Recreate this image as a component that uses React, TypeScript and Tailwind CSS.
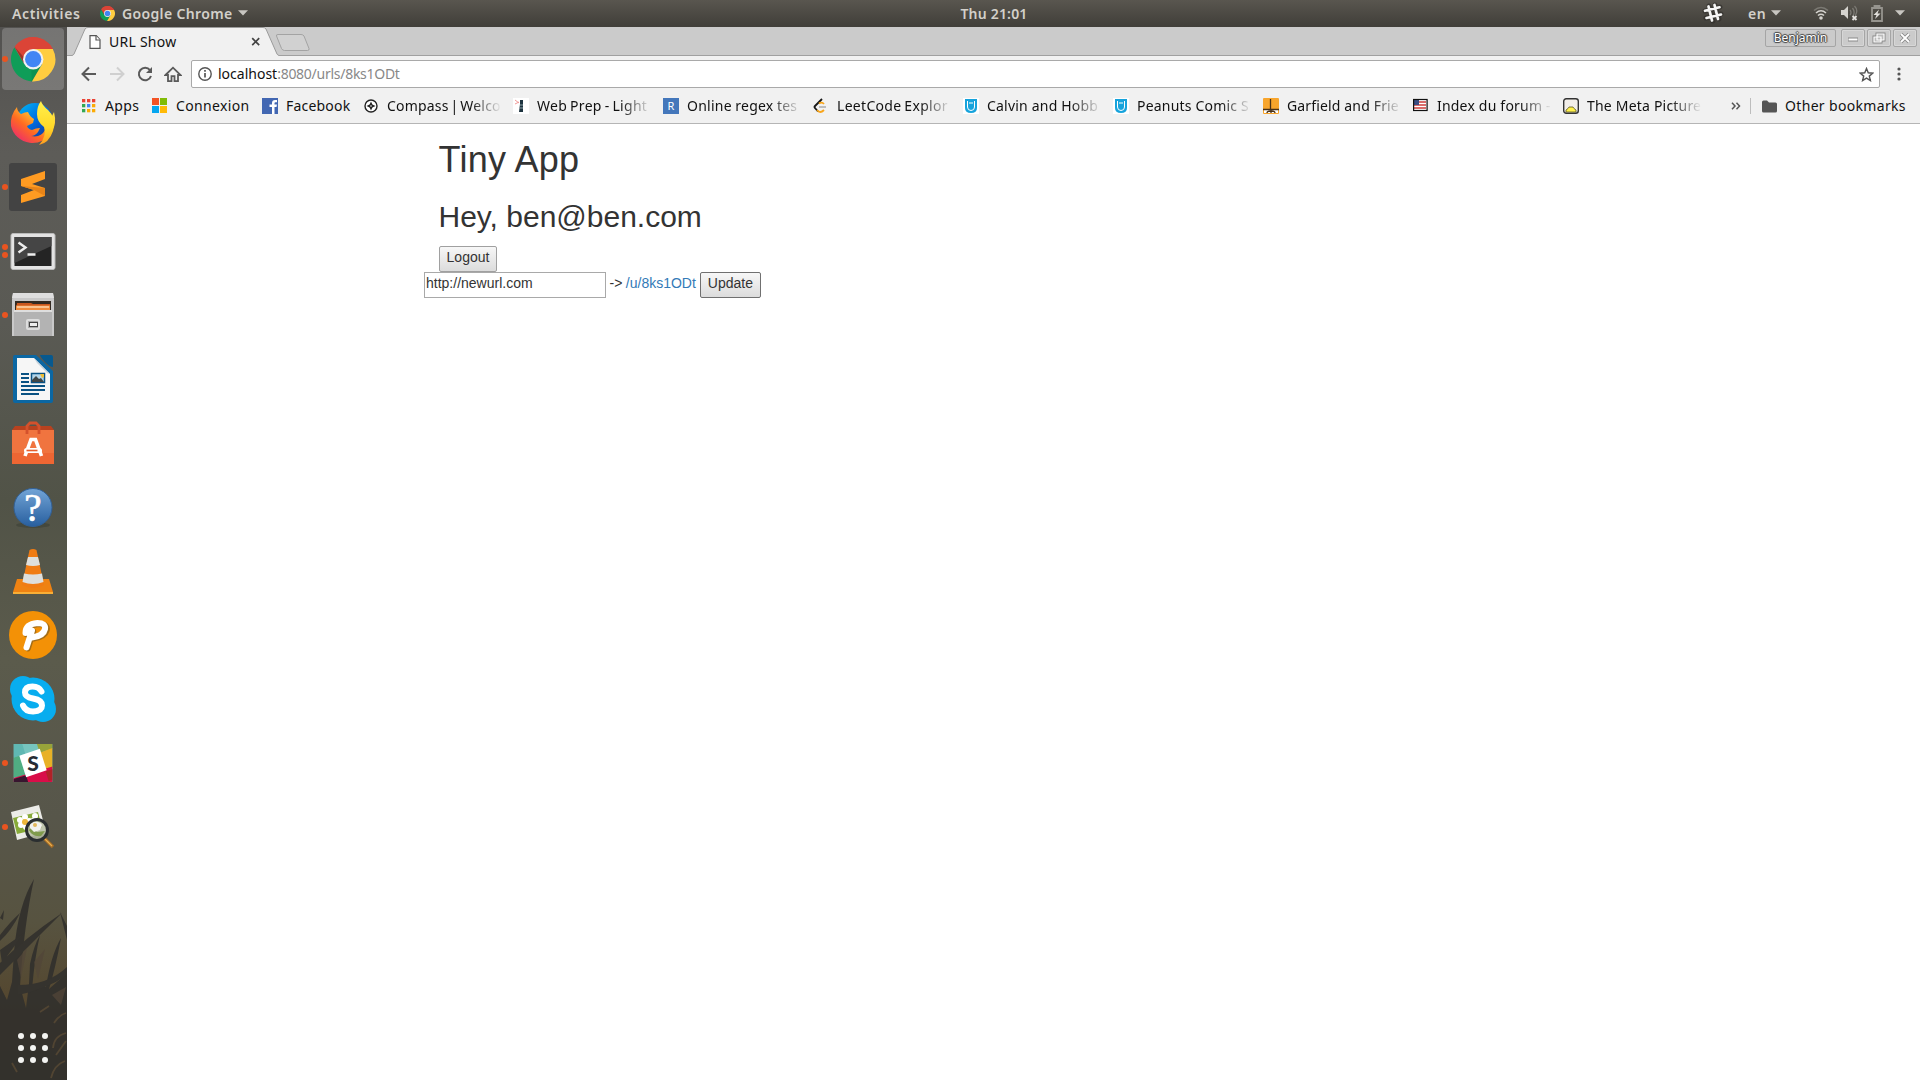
import type { ReactNode } from "react";

const ui = "font-['Noto_Sans','Open_Sans',sans-serif]";

function ChromeLogo({ size }: { size: number }) {
  return (
    <svg width={size} height={size} viewBox="0 0 48 48" className="shrink-0">
      <path d="M24 24 4.1 10.6A24 24 0 0 1 45.2 13H24z" fill="#db4437" />
      <path d="M3.6 11.4A24 24 0 0 0 22.6 48L33.5 29.5 14.5 29.5z" fill="#0f9d58" />
      <path d="M45.2 13A24 24 0 0 1 22.6 48L33.5 29.5 24 13z" fill="#ffcd40" />
      <path d="M24 13h21.2A24 24 0 0 0 4 10.8L14.5 29 18 16z" fill="#db4437" />
      <circle cx="24" cy="24" r="11" fill="#f1f1f1" />
      <circle cx="24" cy="24" r="8.8" fill="#4285f4" />
    </svg>
  );
}

function Caret() {
  return (
    <svg width="10" height="6" viewBox="0 0 10 6" className="shrink-0">
      <path d="M0 .3h10L5 5.6z" fill="#c8c6c1" />
    </svg>
  );
}

function TopBar() {
  return (
    <header className={`${ui} grid h-[27px] shrink-0 grid-cols-[1fr_auto_1fr] items-center bg-linear-to-b from-[#59564f] to-[#403e39] pb-px text-[14px] font-semibold text-[#d3d0ca]`}>
      <div className="flex items-center pl-3">
        <span className="w-[88px] whitespace-nowrap tracking-[0.6px]">Activities</span>
        <ChromeLogo size={15} />
        <span className="ml-[7px] w-[116px] whitespace-nowrap tracking-[0.35px]">Google Chrome</span>
        <Caret />
      </div>
      <span className="pl-[68px] tracking-[0.2px]">Thu 21:01</span>
      <div className="flex items-center justify-end pr-[15px]">
        <svg width="22" height="22" viewBox="0 0 22 22" className="mr-[24px]">
          <g stroke="#2d2c28" strokeWidth="5" strokeLinecap="round" fill="none" opacity=".6">
            <path d="M7 4l4 15M13 3l4 14M3 9l15-4M4 16l15-4" />
          </g>
          <g stroke="#f6f6f5" strokeWidth="2.700" strokeLinecap="round" fill="none">
            <path d="M6.500 4.500l3.500 14M12.500 3l3.500 14M3 8.800l14.500-3.500M4.500 16l14.500-3.500" />
          </g>
        </svg>
        <span className="mr-[5px] tracking-[0.4px]">en</span>
        <Caret />
        <svg width="16" height="14" viewBox="0 0 16 14" className="ml-[32px]" fill="none" strokeWidth="1.6">
          <path d="M1 4.500Q8-1.500 15 4.500" stroke="#7b7973" />
          <path d="M3 7Q8 2.500 13 7M5 9.500Q8 7 11 9.500" stroke="#d5d3ce" />
          <circle cx="8" cy="12" r="1.800" fill="#d5d3ce" />
        </svg>
        <svg width="18" height="16" viewBox="0 0 18 16" className="ml-[12px]">
          <path d="M0 5h3l4-4v13l-4-4H0z" fill="#d5d3ce" />
          <path d="M9 5q2 2.500 0 5M11.500 3q3 4 .5 8M13.500 1q4 4 1 9" stroke="#7b7973" strokeWidth="1.300" fill="none" />
          <path d="M11.500 11l4 4m0-4l-4 4" stroke="#e2e0dc" strokeWidth="1.800" />
        </svg>
        <svg width="12" height="17" viewBox="0 0 12 17" className="ml-[12px]">
          <path d="M3.500 2.500V1h5v1.500M1 3h10v13H1z" stroke="#96948e" strokeWidth="1.800" fill="none" />
          <path d="M8 4.500 2.500 10h3L4 14l5.500-5.500h-3z" fill="#e2e0dc" />
        </svg>
        <span className="ml-[12px] flex"><Caret /></span>
      </div>
    </header>
  );
}

function DockItem({ dots = 0, active = false, children }: { dots?: number; active?: boolean; children: ReactNode }) {
  return (
    <div className="relative flex h-16 items-center justify-center">
      {active && <div className="absolute left-[2px] top-px h-[62px] w-[62px] rounded-[4px] bg-white/20" />}
      <div className="absolute left-[2px] flex h-full flex-col items-center justify-center gap-[2px]">
        {Array.from({ length: dots }, (_, i) => (
          <span key={i} className="size-[6px] rounded-full bg-[#e95420]" />
        ))}
      </div>
      <svg width="48" height="48" viewBox="0 0 48 48" className="relative -left-px">
        {children}
      </svg>
    </div>
  );
}

function Grass() {
  return (
    <svg className="absolute bottom-0 left-0" width="67" height="210" viewBox="0 870 67 210">
      <path d="M0 1080V986l7 14 5-18 2-30Q18 905 34 879 24 925 20 986l6 22 3-24 1-20Q34 945 40 935 35 955 32 989l10-2 4 0Q51 955 61 938 55 970 49 989l18-16v107z" fill="#33312d" opacity=".96" />
      <g fill="#35332e">
        <path d="M0 963Q25 938 62 913 35 940 0 975zM0 935q10-13 20-22-8 17-20 28zM0 918l4-8-1 10zM0 950l24-17-22 30zM60 912l7 14v14zM18 985q30 0 49-18v8q-20 14-49 20z" />
      </g>
      <path d="M17 960l10-12-6 30zM34 962l11-13-7 30zM52 995l14-8-5 18z" fill="#514638" opacity=".75" />
      <g stroke="#594a35" strokeWidth="1.800" fill="none" opacity=".8">
        <path d="M54 1023q5-8 12-10M53 1048q1-12 13-15M56 1055l10-14M51 1078q3-13 14-17M12 1063l5 9M40 1012l9-6" />
      </g>
    </svg>
  );
}

function Dock() {
  return (
    <nav className="relative w-[67px] shrink-0 overflow-hidden bg-[linear-gradient(to_bottom,#535250_0%,#5d5c58_12%,#5a5a54_28%,#515347_45%,#5b5b4c_60%,#57564a_75%,#575340_85%,#54462e_93%,#3c3327_100%)]">
      <Grass />
      <div className="relative flex h-full flex-col">
        <DockItem dots={1} active>
          <g transform="translate(2 2) scale(.925)">
            <path d="M24 24 4.100 10.600A24 24 0 0 1 45.200 13z" fill="#db4437" />
            <path d="M3.600 11.400A24 24 0 0 0 22.600 48L33.500 29.500h-19z" fill="#0f9d58" />
            <path d="M45.200 13A24 24 0 0 1 22.600 48L33.500 29.500 24 13z" fill="#ffcd40" />
            <path d="M24 13h21.200A24 24 0 0 0 4 10.800L14.500 29 18 16z" fill="#db4437" />
            <path d="M4 10.800 14.500 29 14 22z" fill="#9c3428" />
            <path d="M22.600 48L33.500 29.500 22 34z" fill="#0b7d45" opacity=".35" />
            <circle cx="24" cy="24" r="11" fill="#f1f1f1" />
            <circle cx="24" cy="24" r="8.800" fill="#4285f4" />
          </g>
        </DockItem>
        <DockItem>
          <defs>
            <linearGradient id="fox" x1="1" y1="0" x2="0" y2="1">
              <stop offset="0" stopColor="#fff44f" /><stop offset=".35" stopColor="#ffbd2b" /><stop offset=".6" stopColor="#ff6a22" /><stop offset="1" stopColor="#e61587" />
            </linearGradient>
            <linearGradient id="globe" x1="0" y1="0" x2="1" y2="1">
              <stop offset="0" stopColor="#00bdf5" /><stop offset=".5" stopColor="#006be0" /><stop offset="1" stopColor="#1b2a86" />
            </linearGradient>
            <linearGradient id="tail" x1="0" y1="0" x2="0" y2="1">
              <stop offset="0" stopColor="#fff04d" /><stop offset=".6" stopColor="#ffd928" /><stop offset="1" stopColor="#ff9a20" />
            </linearGradient>
          </defs>
          <circle cx="26" cy="22" r="18" fill="url(#globe)" />
          <path d="M8 8q0 4 4 7 4-2 7-2 2 5 6 7l-1 4-6 3q1 3 5 4 4-2 8-2l-2 4q-3 4-7 4 10 2 14-6l9-18q3 12-2 19a22 22 0 0 1-41-5Q1 16 8 8z" fill="url(#fox)" />
          <path d="M32 2q1 4 7 9 9 8 5 21-4 12-14 14 8-9 5-18-7-5-7-13 0-8 4-13z" fill="url(#tail)" />
        </DockItem>
        <DockItem dots={1}>
          <rect width="48" height="48" rx="3" fill="#434343" />
          <path d="M12 16l24-8v8l-13 5 13 4v8l-24 7v-8l13-5-13-4z" fill="#ff9b22" />
          <path d="M12 23l24 2v8l-11-6z" fill="#e88418" />
        </DockItem>
        <DockItem dots={2}>
          <g transform="translate(.5 1)">
            <rect x="1.500" y="5.500" width="44" height="36" rx="2" fill="#e3e3e3" stroke="#bababa" />
            <rect x="5" y="9" width="37" height="29" fill="#242424" />
            <path d="M5 9h37v9L5 35z" fill="#454545" />
            <path d="M9 14.500l7 5-7 5M18 26.500h8" stroke="#eee" strokeWidth="2.400" fill="none" />
          </g>
        </DockItem>
        <DockItem dots={1}>
          <path d="M4 2h40l1 6v37H3V8z" fill="#c9c9c9" />
          <path d="M4 2h40l1 5H3z" fill="#dedede" />
          <path d="M6 10h36v13H6z" fill="#332a22" />
          <path d="M8 12h14l2 1h17v7H7z" fill="#c9571f" />
          <path d="M7 14.500h34v6H7z" fill="#f08a3c" />
          <path d="M8 16h32" stroke="#ffe1bd" strokeWidth="1.300" />
          <path d="M5 19h38v26H5z" fill="#b3b3b3" />
          <path d="M5 19h38v2H5z" fill="#dedede" />
          <rect x="18" y="29" width="12" height="9" rx="1" fill="#aaa" stroke="#ddd" strokeWidth="2" />
          <rect x="20.500" y="31.500" width="8" height="4" fill="#eee" stroke="#444" />
        </DockItem>
        <DockItem>
          <path d="M6 0h21l17 16v30q0 2-2 2H6q-2 0-2-2V2q0-2 2-2z" fill="#0b67a3" />
          <path d="M31 0h11q2 0 2 2v10q-3 0-7-4-5-5-6-8z" fill="#07598f" />
          <path d="M8 3h17l16 16v26H8z" fill="#f6f6f6" />
          <path d="M25 3l4 4 12 12-3-1-10-10z" fill="#c9d4dc" />
          <path d="M12 19h8M12 23h8M12 27h8M12 31h24M12 35h24M12 39h18" stroke="#0a5283" strokeWidth="2" />
          <path d="M22.500 18.500h13v9h-13z" fill="#b2d5ea" stroke="#0a5283" strokeWidth="1.500" />
          <path d="M23 27v-2l4-4 3 3 2-1 3 4z" fill="#404647" />
          <path d="M31 19h4v3l-2 1z" fill="#f0bd35" />
        </DockItem>
        <DockItem>
          <g transform="translate(0 2)">
            <path d="M3 9h42v34H3z" fill="#ee6633" />
            <path d="M3 9h42v23H3z" fill="#f0743f" />
            <path d="M3 9l3-4h36l3 4z" fill="#b8421f" />
            <path d="M18 13V5l3-3h6l3 3v8" stroke="#d4512c" strokeWidth="2.800" fill="none" />
            <path d="M16 35l6-16.500h4.500l6 16.500" stroke="#fff" strokeWidth="3.600" fill="none" />
            <rect x="15" y="27" width="18" height="5" rx="2.500" fill="#fff" />
            <path d="M17.500 29.500h11" stroke="#e65f2d" strokeWidth="1.600" />
          </g>
        </DockItem>
        <DockItem>
          <defs>
            <linearGradient id="help" x1="0" y1="0" x2="0" y2="1"><stop stopColor="#72a4d6" /><stop offset="1" stopColor="#285f9f" /></linearGradient>
          </defs>
          <ellipse cx="24" cy="42" rx="17" ry="3" fill="#33362e" opacity=".4" />
          <circle cx="24" cy="24.500" r="19" fill="url(#help)" stroke="#315f95" />
          <text x="24" y="37.500" textAnchor="middle" className="font-['Liberation_Serif',serif] text-[39px]" fill="#fff" stroke="#fff" strokeWidth=".7">?</text>
        </DockItem>
        <DockItem>
          <path d="M8 32h32l4 13H4z" fill="#ef8212" />
          <path d="M4 45h40v2H4z" fill="#f8ae36" />
          <path d="M20.500 3q3.500-2 7 0l7.500 35q-11 6-22 0z" fill="#f07c14" />
          <path d="M19 10h10l2 8q-7 2-14 0zM15 26.500q9 2 18 0l1.500 8.500q-10.500 4-21 0z" fill="#dedfdd" />
        </DockItem>
        <DockItem>
          <circle cx="24" cy="24" r="24" fill="#f39106" />
          <g fill="none" strokeLinecap="round" strokeLinejoin="round">
            <path d="M18 36.500l5.500-17M17 22.500q0-9.500 12-10.500 9 0 8 6-2 7-13 8.500" stroke="#85601e" strokeWidth="6" opacity=".7" transform="translate(.8 1)" />
            <path d="M17.500 36.500l5.500-17M16.500 22q0-9 12-10 8.500 0 7.500 6-1.500 7-13 8.500" stroke="#fff" strokeWidth="6" />
          </g>
        </DockItem>
        <DockItem>
          <circle cx="24" cy="24" r="21.500" fill="#08adef" /><circle cx="14" cy="14" r="13" fill="#08adef" /><circle cx="34" cy="34" r="13" fill="#08adef" />
          <path d="M32.500 16.500q-2.500-5-9-5-7.500 0-7.500 6 0 4.500 8 6 9 1.500 9 7t-9 6q-7.500 0-10-6" stroke="#fff" strokeWidth="6" strokeLinecap="round" fill="none" />
        </DockItem>
        <DockItem dots={1}>
          <svg x="4.500" y="4.500" width="39" height="39" viewBox="0 0 40 39">
            <rect width="40" height="39" fill="#76c5bf" />
            <path d="M0 0h9l3 10L0 14z" fill="#60b8b3" /><path d="M0 14l6-2 7 22H0z" fill="#50ad82" />
            <path d="M24 0h16v5L27 9z" fill="#97a33a" /><path d="M27 9l13-5v22l-7 2z" fill="#e8b126" />
            <path d="M0 35l40-12v16H0z" fill="#d90d49" /><path d="M0 36l13-4 2 7H0z" fill="#38152f" />
            <path d="M33 28l7-2v11l-4 1z" fill="#b12227" />
            <path d="M6 12l21-7 7 22-21 7z" fill="#fff" />
          </svg>
          <text x="24" y="31.500" textAnchor="middle" className="font-['Lato',sans-serif] text-[21px] font-black" fill="#262c35">S</text>
        </DockItem>
        <DockItem dots={1}>
          <path d="M2 9l28-7 7 27L8 37z" fill="#ecece8" />
          <path d="M4 15l25-6 4 16-25 6z" fill="#87aa39" />
          <g fill="#fff"><circle cx="11" cy="17" r="3" /><circle cx="16" cy="14" r="3" /><circle cx="20" cy="18" r="3" /><circle cx="12" cy="22" r="3" /><circle cx="17" cy="24" r="3" /><circle cx="26" cy="13" r="3" /><circle cx="24" cy="18" r="3" /></g>
          <circle cx="16" cy="19" r="3" fill="#edb73b" />
          <path d="M35 35l9 9" stroke="#a46c27" strokeWidth="3.500" /><path d="M34 34l9 9" stroke="#e8ae4e" strokeWidth="1.300" />
          <circle cx="28" cy="27" r="10.500" fill="#b9bfa6" fillOpacity=".85" />
          <path d="M20 27q3 7 12 6l4-5-8 1-5-5z" fill="#7f9b4c" />
          <path d="M21 21q8-5 12 1l-2 5-6 2-4-4z" fill="#f2f2ee" />
          <circle cx="26" cy="22" r="2" fill="#e2b85a" />
          <circle cx="28" cy="27" r="10.500" fill="none" stroke="#2a2e30" strokeWidth="3" />
        </DockItem>
        <div className="mt-auto mb-[17px] grid grid-cols-3 gap-[6px] self-center pr-px">
          {Array.from({ length: 9 }, (_, i) => (
            <span key={i} className="size-[6px] rounded-full bg-[#f4f4f2]" />
          ))}
        </div>
      </div>
    </nav>
  );
}

function WinButton({ children }: { children: ReactNode }) {
  return (
    <div className="flex h-[18px] w-6 items-center justify-center rounded-[2px] border border-[#a5a5a5] bg-[#cbcbcb] shadow-[inset_0_0_0_1px_#d7d7d7]">
      <svg width="14" height="14" viewBox="0 0 14 14" fill="none">{children}</svg>
    </div>
  );
}

function TabStrip() {
  return (
    <div className={`${ui} relative flex h-[29px] shrink-0 items-start border-b border-[#a0a0a0] bg-[#cbcbcb]`}>
      <div className="relative ml-[5px] flex h-[29px] w-[208px] items-center pl-[17px]">
        <svg className="absolute left-0 top-0" width="208" height="29" viewBox="0 0 208 29">
          <path d="M0 28.500 2 27 13 2Q14 .5 16 .5H191Q193 .5 194 2L205 27l2 1.500V29H0z" fill="#f1f1f1" />
          <path d="M0 28.500Q1.500 28 2 27L13 2Q14 .5 16 .5H191Q193 .5 194 2L205 27q.5 1 2 1.500" stroke="#9b9b9b" fill="none" />
        </svg>
        <svg width="12" height="14" viewBox="0 0 12 14" className="relative" fill="#fff" stroke="#555" strokeWidth="1.200">
          <path d="M1 .7h6.300l3.700 4v8.600H1z" /><path d="M7 1v4h4" />
        </svg>
        <span className="relative ml-[8px] w-[141px] whitespace-nowrap text-[14px] tracking-[0.25px] text-[#111]">URL Show</span>
        <svg width="10" height="10" viewBox="0 0 10 10" className="relative ml-[1px]"><path d="M1.200 1.200l7 7m0-7l-7 7" stroke="#444" strokeWidth="1.700" /></svg>
      </div>
      <svg width="36" height="20" viewBox="0 0 36 20" className="-ml-[5px] mt-[6px]">
        <path d="M3 1.500H26Q28 1.500 29 3L34 15.500Q34.500 17.500 32.500 17.500H9.500Q7.500 17.500 6.500 15.500L1.500 3Q1 1.500 3 1.500z" fill="#d1d1d1" stroke="#a3a3a3" />
      </svg>
      <div className="ml-auto mr-[3px] mt-[2px] flex gap-[2px]">
        <div className="mr-[3px] flex h-[18px] w-[71px] items-center justify-center rounded-[2px] border border-[#a5a5a5] text-[12px] text-white [text-shadow:0_0_1px_#444,1px_0_1px_#444,-1px_0_1px_#444,0_1px_1px_#444,0_-1px_1px_#444]">Benjamin</div>
        <WinButton><path d="M2 8.500h10" stroke="#888" strokeWidth="4" /><path d="M2.500 8.500h9" stroke="#fff" strokeWidth="2" /></WinButton>
        <WinButton>
          <path d="M5 3h7v6H5zM2 6h7v5H2z" stroke="#888" strokeWidth="3" /><path d="M5 3h7v6H5zM2 6h7v5H2z" stroke="#fff" strokeWidth="1.200" fill="#bbb" />
        </WinButton>
        <WinButton><path d="M3 3l8 8m0-8l-8 8" stroke="#888" strokeWidth="3.600" /><path d="M3 3l8 8m0-8l-8 8" stroke="#fff" strokeWidth="1.800" /></WinButton>
      </div>
    </div>
  );
}

function Toolbar() {
  return (
    <div className="flex h-[36px] shrink-0 items-center bg-[#f1f1f1] pl-[14px] pr-[19px]">
      <svg width="16" height="16" viewBox="0 0 16 16" fill="none" stroke="#5a5a5a" strokeWidth="2"><path d="M15 8H2M8 1.500L1.500 8 8 14.500" /></svg>
      <svg width="16" height="16" viewBox="0 0 16 16" className="ml-[12px]" fill="none" stroke="#d0d0d0" strokeWidth="2"><path d="M1 8h13M8 1.500L14.500 8 8 14.500" /></svg>
      <svg width="16" height="16" viewBox="0 0 16 16" className="ml-[12px]"><path d="M13 4.200A6.200 6.200 0 1 0 14 10" fill="none" stroke="#5a5a5a" strokeWidth="2" /><path d="M15 1v6H9z" fill="#5a5a5a" /></svg>
      <svg width="18" height="17" viewBox="0 0 18 17" className="ml-[11px]"><path d="M1.500 9L9 1.700 16.500 9H14v6.200h-3.500v-5h-3v5H4V9z" fill="none" stroke="#5a5a5a" strokeWidth="1.800" /></svg>
      <div className={`${ui} ml-[9px] flex h-7 grow items-center rounded-[2px] border border-[#a9a9a9] bg-white pl-[6px] pr-[5px] text-[14px]`}>
        <svg width="14" height="14" viewBox="0 0 14 14"><circle cx="7" cy="7" r="6.200" fill="none" stroke="#555" strokeWidth="1.400" /><path d="M7 6v4.500M7 3v1.700" stroke="#555" strokeWidth="1.700" /></svg>
        <span className="ml-[6px] whitespace-nowrap pb-[2px] text-[#111]">localhost<span className="tracking-[-0.27px] text-[#888]">:8080/urls/8ks1ODt</span></span>
        <svg width="15" height="15" viewBox="0 0 24 24" className="ml-auto" fill="none" stroke="#555" strokeWidth="2.300"><path d="M12 2.500l2.800 6.800 7.200.6-5.500 4.700 1.700 7.100L12 17.900l-6.200 3.800 1.700-7.100L2 9.900l7.200-.6z" /></svg>
      </div>
      <svg width="4" height="14" viewBox="0 0 4 14" className="ml-[17px]" fill="#555"><circle cx="2" cy="2" r="1.600" /><circle cx="2" cy="7" r="1.600" /><circle cx="2" cy="12" r="1.600" /></svg>
    </div>
  );
}

const strip = (
  <>
    <rect width="16" height="16" fill="#fff" />
    <path d="M2 1h12v9q0 5-6 5t-6-5z" fill="#16a3dc" />
    <path d="M4.500 3v6q0 3.500 3.500 3.500t3.500-3.500V3M7 4v2M9 4v2" stroke="#fff" fill="none" />
  </>
);

const appsColors = ["#ea4335", "#ea4335", "#ea4335", "#34a853", "#4285f4", "#fbab05", "#34a853", "#fbab05", "#fbab05"];

const bookmarks: { label: string; slot: string; text: string; icon: ReactNode; fade?: boolean }[] = [
  { label: "Apps", slot: "w-[71px]", text: "tracking-[0.4px]", icon: appsColors.map((c, i) => <rect key={i} x={1 + (i % 3) * 5} y={1 + Math.floor(i / 3) * 5} width="3.300" height="3.300" fill={c} />) },
  { label: "Connexion", slot: "w-[110px]", text: "tracking-[0.35px]", icon: <><path d="M0 0h7v7H0z" fill="#f35325" /><path d="M8 0h7v7H8z" fill="#81bc06" /><path d="M0 8h7v7H0z" fill="#05a6f0" /><path d="M8 8h7v7H8z" fill="#ffba08" /></> },
  { label: "Facebook", slot: "w-[101px]", text: "tracking-[0.2px]", icon: <><rect width="16" height="16" fill="#4267b2" /><path d="M10 16V9H7.500V6.500H10V5q0-3 3-3h2v2.300h-1.500q-1 0-1 1v1.200H15L14.500 9h-2v7z" fill="#fff" /></> },
  { label: "Compass | Welco", slot: "w-[150px]", text: "tracking-[0.2px] [word-spacing:-2px]", fade: true, icon: <><circle cx="8" cy="8" r="6" fill="#fff" stroke="#222" strokeWidth="1.400" /><path d="M8 3.500l1.400 3.100L12.500 8 9.400 9.400 8 12.500 6.600 9.400 3.500 8l3.100-1.400z" fill="#222" /><circle cx="8" cy="8" r=".8" fill="#fff" /></> },
  { label: "Web Prep - Light", slot: "w-[150px]", text: "tracking-[0.3px] [word-spacing:-1px]", fade: true, icon: <><rect width="16" height="16" fill="#fff" /><path d="M2 2l4 3M2 6l4-2" stroke="#f29a98" /><path d="M7 2h3v12H6l1-8z" fill="#1d333f" /><path d="M7 7h3M6 10h4" stroke="#8da2a8" /></> },
  { label: "Online regex tes", slot: "w-[150px]", text: "tracking-[0.25px] [word-spacing:-0.5px]", fade: true, icon: <><rect width="16" height="16" fill="#4477bb" /><text x="8" y="12" textAnchor="middle" className="text-[11px]" fill="#fff">R</text></> },
  { label: "LeetCode Explor", slot: "w-[150px]", text: "tracking-[0.3px] [word-spacing:-1px]", fade: true, icon: <><path d="M9 1L2 8q-1 1 0 2l3 3.500" stroke="#171717" strokeWidth="1.800" fill="none" /><path d="M4 12q3 4 7 0M6 5.500q3-2 5 .5" stroke="#f8a51a" strokeWidth="1.800" fill="none" /><path d="M6 9h7" stroke="#aaa" strokeWidth="1.500" /></> },
  { label: "Calvin and Hobb", slot: "w-[150px]", text: "tracking-[0.2px]", fade: true, icon: strip },
  { label: "Peanuts Comic S", slot: "w-[150px]", text: "tracking-[0.2px]", fade: true, icon: strip },
  { label: "Garfield and Frie", slot: "w-[150px]", text: "tracking-[0.15px]", fade: true, icon: <><rect width="16" height="16" rx="1" fill="#f8a52c" /><path d="M1 12h14v3H1z" fill="#fff" /><path d="M7.500 1v10M0 11.500h16M4 15q0-2 4-2t4 2M8 12v3" stroke="#493117" strokeWidth="1.300" fill="none" /></> },
  { label: "Index du forum -", slot: "w-[150px]", text: "tracking-[0.2px]", fade: true, icon: <><rect y="2" width="13" height="10" fill="#fff" /><path d="M0 4h13M0 7h13M0 10h13" stroke="#ce3d3b" strokeWidth="1.400" /><path d="M0 2h6v5H0z" fill="#394d83" /><rect x=".6" y="1.500" width="13.500" height="11" fill="none" stroke="#111" strokeWidth="1.200" /></> },
  { label: "The Meta Picture", slot: "w-[150px]", text: "tracking-[0.2px]", fade: true, icon: <><rect x=".7" y=".7" width="14.600" height="14.600" rx="2.500" fill="#f2eee9" stroke="#333" strokeWidth="1.400" /><path d="M3 14v-2l2-1.500 1-1.500h4l1 1.500 2 1.500v2z" fill="#fff14b" stroke="#5c5722" strokeWidth=".8" /></> },
];

function BookmarksBar() {
  return (
    <div className={`${ui} flex h-[32px] shrink-0 items-center border-b border-[#b5b5b5] bg-[#f1f1f1] pb-[3px] pl-[14px] text-[14px] text-[#111]`}>
      {bookmarks.map((b) => (
        <div key={b.label} className={`flex shrink-0 items-center ${b.slot}`}>
          <svg width="16" height="16" viewBox="0 0 16 16" className="shrink-0">{b.icon}</svg>
          <span className={`${b.text} ml-2 whitespace-nowrap pb-[2px] ${b.fade ? "w-[116px] [mask-image:linear-gradient(to_right,black_72%,transparent_99%)]" : ""}`}>{b.label}</span>
        </div>
      ))}
      <svg width="10" height="8" viewBox="0 0 10 8" className="ml-[18px]" fill="none" stroke="#555" strokeWidth="1.500"><path d="M1 .8L4 4 1 7.200M5.500 .8L8.500 4 5.500 7.200" /></svg>
      <div className="ml-[9px] h-4 w-px bg-[#bdbdbd]" />
      <svg width="15" height="13" viewBox="0 0 15 13" className="ml-[11px]"><path d="M0 2Q0 .5 1.500.5H5l2 2h6.500Q15 2.500 15 4v7q0 1.500-1.500 1.500h-12Q0 12.500 0 11z" fill="#555" /></svg>
      <span className="ml-2 whitespace-nowrap pb-[2px] tracking-[0.33px]">Other bookmarks</span>
    </div>
  );
}

function Page() {
  return (
    <main className="grow bg-white pl-[357px] font-['Liberation_Sans',Arial,sans-serif] text-[14px] text-[#333]">
      <div className="flex flex-col items-start pl-[15px]">
        <h1 className="-ml-[0.5px] mt-[16px] text-[36px] leading-[40px] tracking-[0.25px]">Tiny App</h1>
        <h2 className="-ml-[0.5px] mt-[20px] text-[30px] leading-[33px]">Hey, ben@ben.com</h2>
        <button className="mt-[13px] h-[26px] w-[58px] rounded-[2px] border border-[#a0a0a0] bg-linear-to-b from-[#f7f7f7] to-[#dcdcdc] pb-[4px] leading-5">Logout</button>
      </div>
      <form className="flex h-[26px] items-center">
        <input className="h-[26px] w-[182px] border border-[#a9a9a9] bg-white px-px pb-[4px]" defaultValue="http://newurl.com" />
        <span className="ml-[3.5px] pb-[4px]">-&gt;</span>
        <a className="ml-[3.5px] pb-[4px] text-[#337ab7]">/u/8ks1ODt</a>
        <button type="button" className="ml-[4px] h-[26px] w-[61px] rounded-[2px] border border-[#707070] bg-linear-to-b from-[#f7f7f7] to-[#dcdcdc] pb-[4px] leading-5">Update</button>
      </form>
    </main>
  );
}

export default function App() {
  return (
    <div className="flex h-[1080px] w-[1920px] flex-col overflow-hidden bg-white">
      <TopBar />
      <div className="flex min-h-0 grow">
        <Dock />
        <div className="flex min-w-0 grow flex-col">
          <TabStrip />
          <Toolbar />
          <BookmarksBar />
          <Page />
        </div>
      </div>
    </div>
  );
}
